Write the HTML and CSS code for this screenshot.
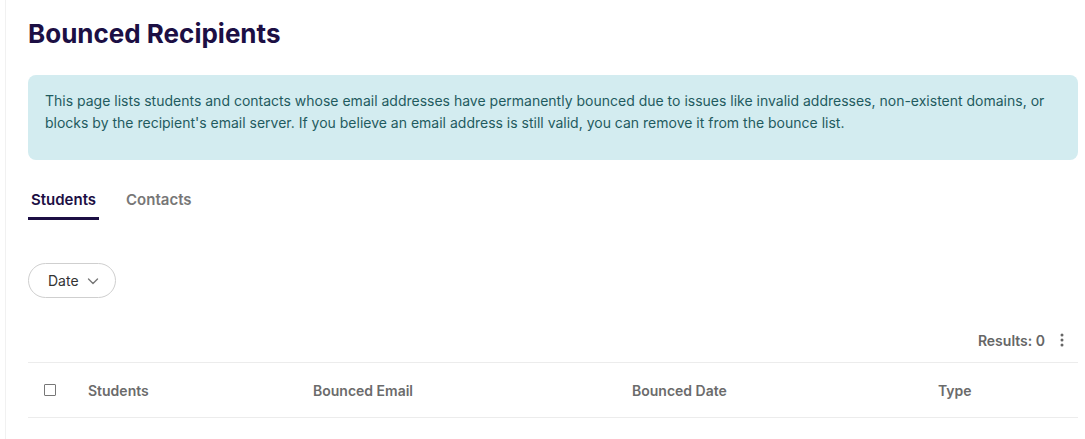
FILE: index.html
```html
<!DOCTYPE html>
<html>
<head>
<meta charset="utf-8">
<link rel="stylesheet" href="styles.css">
</head>
<body>
<div class="frame">
  <main class="page">
    <h1 class="title">Bounced Recipients</h1>
    <div class="alert">This page lists students and contacts whose email addresses have permanently bounced due to issues like invalid addresses, non-existent domains, or blocks by the recipient's email server. If you believe an email address is still valid, you can remove it from the bounce list.</div>
    <nav class="tabs">
      <div class="tab active">Students</div>
      <div class="tab">Contacts</div>
    </nav>
    <div class="filters">
      <button class="pill">Date
        <svg class="chev" width="14" height="14" viewBox="0 0 14 14"><path d="M2.5 5 L7 9.5 L11.5 5" fill="none" stroke="#777" stroke-width="1.4" stroke-linecap="round" stroke-linejoin="round"/></svg>
      </button>
    </div>
    <div class="results">
      <span class="count">Results: 0</span>
      <svg class="kebab" width="4" height="14" viewBox="0 0 4 14"><circle cx="2" cy="2" r="1.5" fill="#666"/><circle cx="2" cy="7" r="1.5" fill="#666"/><circle cx="2" cy="12" r="1.5" fill="#666"/></svg>
    </div>
    <div class="thead">
      <div class="cell cb"><span class="box"></span></div>
      <div class="cell c-students">Students</div>
      <div class="cell c-email">Bounced Email</div>
      <div class="cell c-date">Bounced Date</div>
      <div class="cell c-type">Type</div>
    </div>
  </main>
</div>
</body>
</html>
```

FILE: styles.css
```css
* { box-sizing: border-box; }
html, body { margin: 0; padding: 0; background: #fff; }
body { font-family: Inter, "Noto Sans", sans-serif; }
.frame {
  margin-left: 5px;
  border-left: 1px solid #f1f1f1;
  min-height: 439px;
}
.page {
  padding: 18px 7px 0 22px;
}
.title {
  margin: 0;
  font-size: 26px;
  line-height: 32px;
  font-weight: 700;
  color: #1c0f44;
}
.alert {
  margin-top: 25px;
  background: #d3ecf0;
  border-radius: 8px;
  padding: 15px 17px 26px 17px;
  color: #1f5b5f;
  font-size: 14px;
  line-height: 22px;
  min-height: 83px;
}
.tabs {
  display: flex;
  gap: 24px;
  margin-top: 29px;
}
.tab {
  font-size: 15px;
  font-weight: 600;
  color: #777;
  padding: 0 3px 6px 3px;
  line-height: 22px;
  border-bottom: 3px solid transparent;
}
.tab.active {
  color: #1c0f44;
  border-bottom-color: #1c0f44;
}
.filters {
  margin-top: 43px;
}
.pill {
  display: inline-flex;
  align-items: center;
  gap: 7px;
  height: 35px;
  padding: 0 15px 0 19px;
  border: 1px solid #cfcfcf;
  border-radius: 18px;
  background: #fff;
  font-family: inherit;
  font-size: 14px;
  color: #333;
}
.results {
  display: flex;
  justify-content: flex-end;
  align-items: center;
  gap: 15px;
  margin-top: 32px;
  padding-right: 14px;
  height: 20px;
}
.count {
  font-size: 14px;
  font-weight: 600;
  color: #666;
}
.thead {
  margin-top: 12px;
  display: flex;
  align-items: center;
  height: 56px;
  border-top: 1px solid #ececec;
  border-bottom: 1px solid #ececec;
  font-size: 14px;
  font-weight: 600;
  color: #6b6b6b;
}
.cell { flex: none; }
.cb { width: 60px; padding-left: 16px; display: flex; }
.box {
  width: 12px;
  height: 12px;
  border: 1.5px solid #777;
  border-radius: 1px;
}
.c-students { width: 225px; }
.c-email { width: 319px; }
.c-date { width: 306px; }
.c-type { width: 100px; }
```
